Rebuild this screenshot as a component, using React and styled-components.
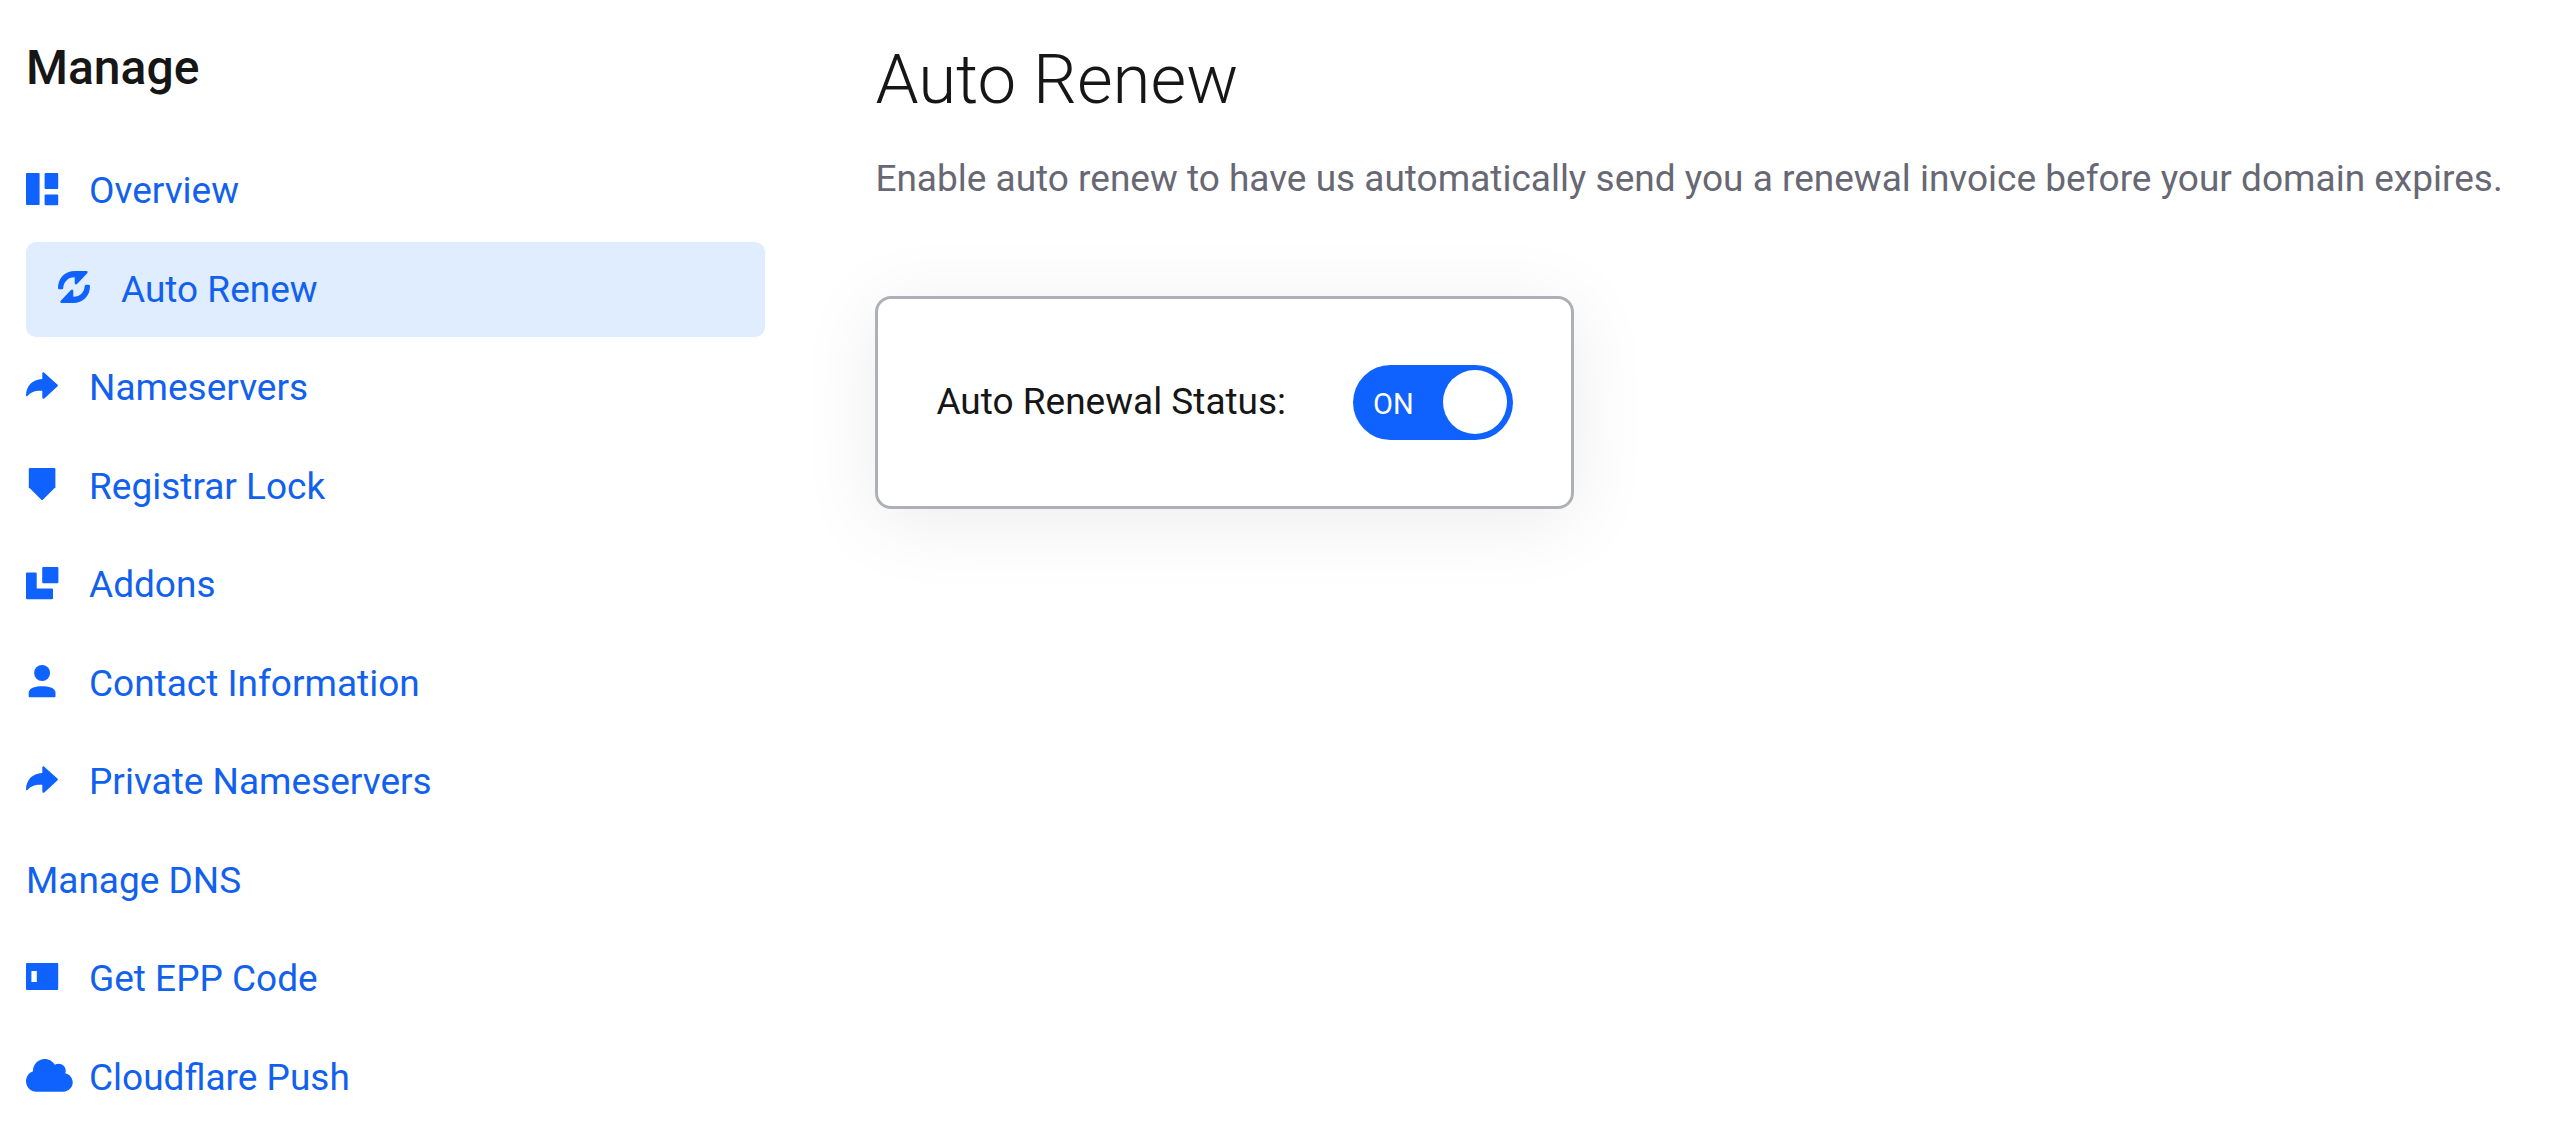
import React, { useState } from "react";
import styled, { createGlobalStyle } from "styled-components";

const GlobalStyle = createGlobalStyle`
  * {
    box-sizing: border-box;
  }
  body {
    margin: 0;
    background: #fff;
    color: #161616;
    font-family: Roboto, "Liberation Sans", sans-serif;
    font-size: 37px;
    line-height: 1.5;
  }
`;

const Page = styled.div`
  display: grid;
  grid-template-columns: minmax(0, 37fr) minmax(0, 83fr);
  gap: 110px;
  align-items: start;
  padding: 32px 26px 0;
`;

const SidebarTitle = styled.h2`
  margin: 0 0 39px;
  font-size: 48px;
  font-weight: 500;
  line-height: 72px;
`;

const NavList = styled.ul`
  display: flex;
  flex-direction: column;
  gap: 3px;
  margin: 0;
  padding: 0;
  list-style: none;
`;

const NavLink = styled.a`
  display: flex;
  align-items: center;
  gap: 15px;
  padding: 20px ${(props) => (props.$active ? "32px" : "0")};
  border-radius: 10px;
  background: ${(props) => (props.$active ? "#e0edff" : "transparent")};
  color: #1261ee;
  text-decoration: none;
`;

const IconSvg = styled.svg`
  flex: none;
  width: 48px;
  height: 36px;
  fill: #0f62fe;
`;

const Title = styled.h1`
  margin: 0;
  font-size: 69px;
  font-weight: 300;
  line-height: 96px;
`;

const Description = styled.p`
  margin: 23px 0 89px;
  color: #676873;
`;

const Card = styled.section`
  display: inline-flex;
  align-items: center;
  gap: 67px;
  padding: 66px 58px;
  border: 3px solid #aeb0b7;
  border-radius: 16px;
  background: #fff;
  box-shadow: 0 12px 80px rgba(0, 0, 0, 0.08);
`;

const SwitchLabel = styled.label`
  white-space: nowrap;
`;

const Switch = styled.input`
  appearance: none;
  display: flex;
  align-items: center;
  justify-content: space-between;
  flex-direction: ${(props) => (props.checked ? "row" : "row-reverse")};
  width: 160px;
  height: 75px;
  margin: 0;
  padding: 0 6px;
  border-radius: 38px;
  background: ${(props) => (props.checked ? "#0f62fe" : "#8d8d8d")};
  color: #fff;
  font-family: inherit;
  font-size: 29px;
  cursor: pointer;

  &::before {
    content: "${(props) => (props.checked ? "ON" : "OFF")}";
    padding: 3px 14px 0;
  }
  &::after {
    content: "";
    width: 64px;
    height: 64px;
    border-radius: 50%;
    background: #fff;
  }
`;

const Share = () => (
  <path
    transform="translate(0 2)"
    d="M16.3 7V1.2Q16.5-.4 18 .4L31.6 12.8Q32.4 13.5 31.6 14.2L18.6 26.3Q16.5 27.7 16.3 25.5V18.7C10 18.4 5 19.5 1.5 24Q.1 25 0 23.3C.3 14 6 7.5 16.3 7z"
  />
);

const RenewArrow = (props) => (
  <path
    {...props}
    d="M0 17C0 7 7 0 17 0H28.3Q30.6.3 29.2 2.2L19.3 12.8Q17.4 14.2 16.7 12.2V6.2C10.3 6 5.5 10.8 5.3 17Q5 18.3 3.8 18.3H1.3Q0 18.3 0 17z"
  />
);

const icons = {
  overview: (
    <>
      <rect width="13.6" height="32" rx="1" />
      <rect x="18.6" width="13.6" height="16" rx="1" />
      <rect x="18.6" y="21.4" width="13.6" height="10.8" rx="1" />
    </>
  ),
  renew: (
    <>
      <RenewArrow />
      <RenewArrow transform="rotate(180 16 16)" />
    </>
  ),
  share: <Share />,
  lock: (
    <path d="M4 0H28.4Q29.4 0 29.4 1V19.2L16.9 31.7Q16.1 32.4 15.3 31.7L2.8 19.2V1Q2.8 0 4 0z" />
  ),
  addons: (
    <>
      <rect x="16.2" width="16.2" height="16.2" rx="1" />
      <path d="M1 5.4H9.7Q10.7 5.4 10.7 6.4V21.4H26Q27 21.4 27 22.4V31.2Q27 32.2 26 32.2H1Q0 32.2 0 31.2V6.4Q0 5.4 1 5.4z" />
    </>
  ),
  contact: (
    <>
      <circle cx="16.1" cy="8" r="8" />
      <path d="M2.7 27.5C3.2 22.5 10 21.2 16.1 21.2S29 22.5 29.5 27.5V31.2Q29.5 32.2 28.5 32.2H3.7Q2.7 32.2 2.7 31.2z" />
    </>
  ),
  code: (
    <path
      fillRule="evenodd"
      d="M1 2H31.2Q32.2 2 32.2 3V28Q32.2 29 31.2 29H1Q0 29 0 28V3Q0 2 1 2zM5.4 10V21H10.8V10z"
    />
  ),
  cloud: (
    <path
      transform="scale(.073) translate(0 -32)"
      d="M537.6 226.6c4.1-10.7 6.4-22.4 6.4-34.6 0-53-43-96-96-96-19.7 0-38.1 6-53.3 16.2C367 64.2 315.3 32 256 32c-88.4 0-160 71.6-160 160 0 2.7.1 5.4.2 8.1C40.2 219.8 0 273.2 0 336c0 79.5 64.5 144 144 144h368c70.7 0 128-57.3 128-128 0-61.9-44-113.6-102.4-125.4z"
    />
  ),
};

const links = [
  { label: "Overview", icon: "overview" },
  { label: "Auto Renew", icon: "renew", active: true },
  { label: "Nameservers", icon: "share" },
  { label: "Registrar Lock", icon: "lock" },
  { label: "Addons", icon: "addons" },
  { label: "Contact Information", icon: "contact" },
  { label: "Private Nameservers", icon: "share" },
  { label: "Manage DNS" },
  { label: "Get EPP Code", icon: "code" },
  { label: "Cloudflare Push", icon: "cloud" },
];

const Sidebar = () => (
  <nav>
    <SidebarTitle>Manage</SidebarTitle>
    <NavList>
      {links.map((link) => (
        <li key={link.label}>
          <NavLink
            href="#"
            $active={link.active}
            aria-current={link.active ? "page" : undefined}
          >
            {link.icon && (
              <IconSvg viewBox="0 0 48 36" aria-hidden="true">
                {icons[link.icon]}
              </IconSvg>
            )}
            <span>{link.label}</span>
          </NavLink>
        </li>
      ))}
    </NavList>
  </nav>
);

export default function App() {
  const [enabled, setEnabled] = useState(true);
  return (
    <>
      <GlobalStyle />
      <Page>
        <Sidebar />
        <main>
          <Title>Auto Renew</Title>
          <Description>
            Enable auto renew to have us automatically send you a renewal
            invoice before your domain expires.
          </Description>
          <Card>
            <SwitchLabel htmlFor="auto-renew">Auto Renewal Status:</SwitchLabel>
            <Switch
              id="auto-renew"
              type="checkbox"
              role="switch"
              checked={enabled}
              onChange={(e) => setEnabled(e.target.checked)}
            />
          </Card>
        </main>
      </Page>
    </>
  );
}
